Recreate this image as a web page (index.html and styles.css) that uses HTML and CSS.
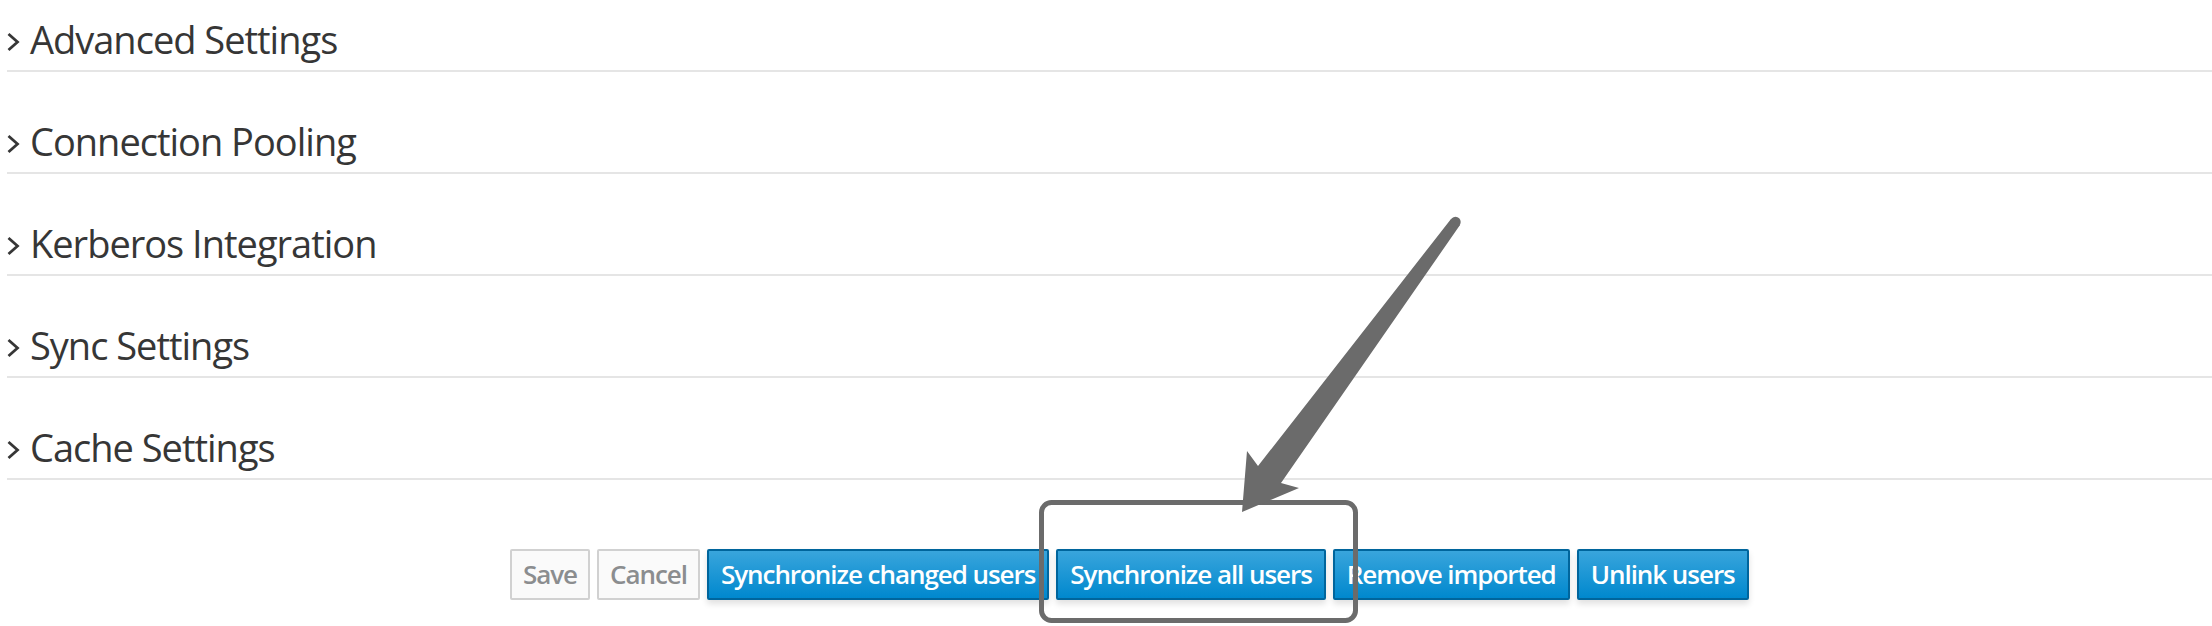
FILE: index.html
```html
<!DOCTYPE html>
<html>
<head>
<meta charset="utf-8">
<link rel="stylesheet" href="styles.css">
</head>
<body>
<div class="page">
  <div class="sections">
    <div class="section"><h2 class="title"><svg class="chev" width="13" height="20" viewBox="0 0 13 20"><polyline points="1.5,2 10.5,10 1.5,18" /></svg><span>Advanced Settings</span></h2></div>
    <div class="section"><h2 class="title"><svg class="chev" width="13" height="20" viewBox="0 0 13 20"><polyline points="1.5,2 10.5,10 1.5,18" /></svg><span>Connection Pooling</span></h2></div>
    <div class="section"><h2 class="title"><svg class="chev" width="13" height="20" viewBox="0 0 13 20"><polyline points="1.5,2 10.5,10 1.5,18" /></svg><span>Kerberos Integration</span></h2></div>
    <div class="section"><h2 class="title"><svg class="chev" width="13" height="20" viewBox="0 0 13 20"><polyline points="1.5,2 10.5,10 1.5,18" /></svg><span>Sync Settings</span></h2></div>
    <div class="section"><h2 class="title"><svg class="chev" width="13" height="20" viewBox="0 0 13 20"><polyline points="1.5,2 10.5,10 1.5,18" /></svg><span>Cache Settings</span></h2></div>
  </div>
  <div class="actions">
    <button class="btn btn-default">Save</button>
    <button class="btn btn-default">Cancel</button>
    <button class="btn btn-primary">Synchronize changed users</button>
    <button class="btn btn-primary">Synchronize all users</button>
    <button class="btn btn-primary">Remove imported</button>
    <button class="btn btn-primary">Unlink users</button>
  </div>
  <svg class="annotation" width="2212" height="626" viewBox="0 0 2212 626">
    <rect x="1041.5" y="502.5" width="314" height="118" rx="10" ry="10" fill="none" stroke="#6b6b6b" stroke-width="5"/>
    <polygon points="1451,219 1258,466 1247,451 1242,512 1299,488 1281,483 1460,225" fill="#6b6b6b"/>
    <circle cx="1455.5" cy="222" r="5.2" fill="#6b6b6b"/>
  </svg>
</div>
</body>
</html>
```

FILE: styles.css
```css
html, body {
  margin: 0;
  padding: 0;
  background: #ffffff;
}

.page {
  position: relative;
  width: 2212px;
  height: 626px;
  overflow: hidden;
  font-family: "Open Sans", "Liberation Sans", sans-serif;
}

.sections {
  padding-left: 7px;
}

.section {
  padding-top: 43px;
  padding-bottom: 5px;
  border-bottom: 2px solid #e5e5e5;
}

.section:first-child {
  padding-top: 13px;
}

.title {
  display: flex;
  align-items: center;
  margin: 0;
  height: 52px;
  font-size: 38px;
  font-weight: 400;
  line-height: 52px;
  letter-spacing: -1px;
  color: #363636;
}

.chev {
  flex: none;
  margin-right: 10px;
  margin-top: 5px;
}

.chev polyline {
  fill: none;
  stroke: #363636;
  stroke-width: 2.8;
  stroke-linecap: butt;
  stroke-linejoin: miter;
}

.actions {
  display: flex;
  gap: 7px;
  padding-left: 510px;
  margin-top: 69px;
}

.btn {
  height: 51px;
  padding: 0 12px;
  border-width: 2px;
  border-style: solid;
  border-radius: 2px;
  font-family: "Open Sans", "Liberation Sans", sans-serif;
  font-size: 26px;
  font-weight: 600;
  letter-spacing: -1.05px;
  line-height: 47px;
  white-space: nowrap;
}

.btn-default {
  background: #fafafa;
  border-color: #d1d1d1;
  color: #8b8d8f;
  padding: 0 11px;
}

.btn-primary {
  background: linear-gradient(to bottom, #39a5dc 0%, #0088ce 100%);
  border-color: #00659c;
  color: #ffffff;
  box-shadow: 0 4px 6px rgba(3, 3, 3, 0.12);
}

.annotation {
  position: absolute;
  left: 0;
  top: 0;
  pointer-events: none;
}
```
